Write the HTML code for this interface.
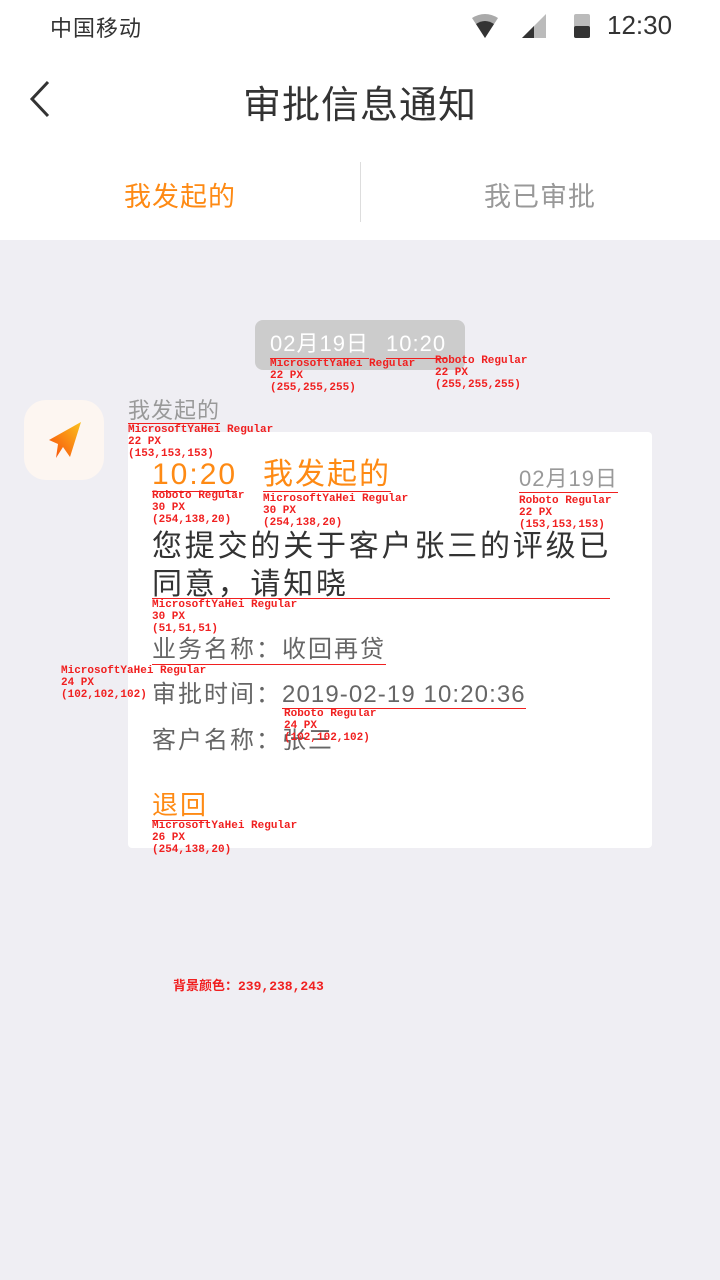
<!DOCTYPE html>
<html><head><meta charset="utf-8"><style>
*{margin:0;padding:0;box-sizing:border-box}
body{width:720px;height:1280px;background:#efeef3;position:relative;overflow:hidden;font-family:"Liberation Sans","Noto Sans CJK SC",sans-serif}
.a{position:absolute;white-space:nowrap}
.an{position:absolute;color:#f02020;font:bold 11px/12px "Liberation Mono","Noto Sans CJK SC",monospace;white-space:pre;z-index:5}
.ul{border-bottom:1px solid #f02020}
</style></head><body>
<div class="a" style="left:0;top:0;width:720px;height:240px;background:#fff"></div>
<div class="a" style="left:50px;top:11px;font-size:22px;color:#333;letter-spacing:1px">中国移动</div>
<svg class="a" style="left:470px;top:12px" width="200" height="30">
<path d="M2 6 Q15 -2 28 6 L15 26 Z" fill="#aaa"/><path d="M6 12 Q15 6 24 12 L15 26 Z" fill="#333"/>
<path d="M52 26 L76 2 L76 26 Z" fill="#bbb"/><path d="M52 26 L64 14 L64 26 Z" fill="#333"/>
<rect x="104" y="2" width="16" height="24" rx="2" fill="#bbb"/><rect x="104" y="14" width="16" height="12" rx="2" fill="#333"/>
</svg>
<div class="a" style="left:607px;top:10px;font-size:26px;color:#333">12:30</div>
<svg class="a" style="left:28px;top:80px" width="24" height="38"><path d="M20 2 L4 19 L20 36" fill="none" stroke="#333" stroke-width="3"/></svg>
<div class="a" style="left:0;width:720px;text-align:center;top:74px;font-size:38px;color:#333;letter-spacing:1px">审批信息通知</div>
<div class="a" style="left:0;width:360px;text-align:center;top:175px;font-size:27px;color:#fe8a14;letter-spacing:1px">我发起的</div>
<div class="a" style="left:360px;width:360px;text-align:center;top:175px;font-size:27px;color:#999;letter-spacing:1px">我已审批</div>
<div class="a" style="left:360px;top:162px;width:1px;height:60px;background:#ddd"></div>

<div class="a" style="left:255px;top:320px;width:210px;height:50px;background:#cccccc;border-radius:8px"></div>
<div class="a ul" style="left:270px;top:330px;font-size:22px;color:#fff;line-height:28px;letter-spacing:1px">02月19日</div>
<div class="a ul" style="left:386px;top:330px;font-size:22px;color:#fff;line-height:28px;letter-spacing:1px">10:20</div>
<div class="an" style="left:270px;top:358px">MicrosoftYaHei Regular
22 PX
(255,255,255)</div>
<div class="an" style="left:435px;top:355px">Roboto Regular
22 PX
(255,255,255)</div>

<div class="a" style="left:128px;top:432px;width:524px;height:416px;background:#fff;border-radius:4px"></div>
<div class="a" style="left:24px;top:400px;width:80px;height:80px;border-radius:22px;background:#fdf6f1"></div>
<svg class="a" style="left:46px;top:420px" width="40" height="40"><defs><linearGradient id="g" x1="0" y1="1" x2="1" y2="0"><stop offset="0" stop-color="#f84a0a"/><stop offset="1" stop-color="#fbc21e"/></linearGradient></defs><path d="M3 20 L35 2 L24 37 L17 27 L10 38 L12 24 Z" fill="url(#g)"/></svg>
<div class="a ul" style="left:128px;top:399px;font-size:22px;color:#999;line-height:24px;letter-spacing:1px">我发起的</div>
<div class="an" style="left:128px;top:424px">MicrosoftYaHei Regular
22 PX
(153,153,153)</div>

<div class="a ul" style="left:152px;top:459px;font-size:30px;color:#fe8a14;line-height:32px;letter-spacing:2px">10:20</div>
<div class="an" style="left:152px;top:490px">Roboto Regular
30 PX
(254,138,20)</div>
<div class="a ul" style="left:263px;top:459px;font-size:30px;color:#fe8a14;line-height:32px;letter-spacing:2px">我发起的</div>
<div class="an" style="left:263px;top:493px">MicrosoftYaHei Regular
30 PX
(254,138,20)</div>
<div class="a ul" style="left:519px;top:466px;font-size:22px;color:#999;line-height:26px;letter-spacing:1px">02月19日</div>
<div class="an" style="left:519px;top:495px">Roboto Regular
22 PX
(153,153,153)</div>
<div class="a" style="left:152px;top:528px;font-size:30px;color:#333;line-height:38px;width:475px;white-space:normal;letter-spacing:2.8px">您提交的关于客户张三的评级已同意，请知晓</div>
<div class="a" style="left:152px;top:598px;width:458px;height:1px;background:#f02020"></div>
<div class="an" style="left:152px;top:599px">MicrosoftYaHei Regular
30 PX
(51,51,51)</div>
<div class="a ul" style="left:152px;top:636px;font-size:24px;color:#666;line-height:28px;letter-spacing:2px">业务名称：收回再贷</div>
<div class="an" style="left:61px;top:665px">MicrosoftYaHei Regular
24 PX
(102,102,102)</div>
<div class="a" style="left:152px;top:681px;font-size:24px;color:#666;line-height:28px;letter-spacing:2px">审批时间：<span class="ul" style="letter-spacing:1.1px">2019-02-19 10:20:36</span></div>
<div class="an" style="left:284px;top:708px">Roboto Regular
24 PX
(102,102,102)</div>
<div class="a" style="left:152px;top:727px;font-size:24px;color:#666;line-height:28px;letter-spacing:2px">客户名称：张三</div>
<div class="a ul" style="left:152px;top:790px;font-size:26px;color:#fe8a14;line-height:30px;letter-spacing:2px">退回</div>
<div class="an" style="left:152px;top:820px">MicrosoftYaHei Regular
26 PX
(254,138,20)</div>
<div class="an" style="left:173px;top:981px;font-size:13px">背景颜色：239,238,243</div>
</body></html>
